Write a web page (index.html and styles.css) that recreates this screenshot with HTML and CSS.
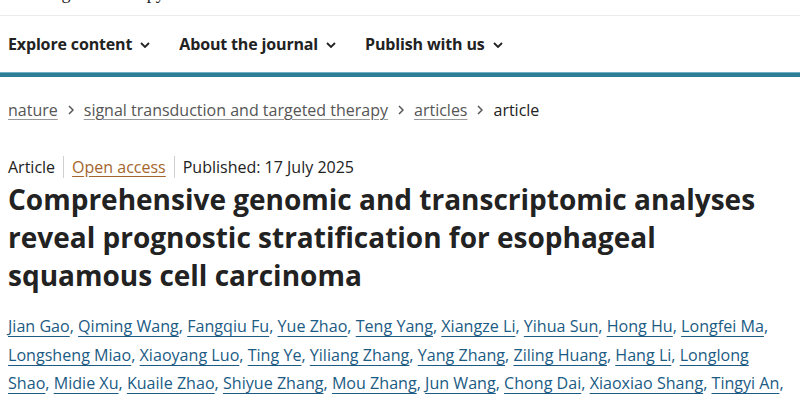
FILE: index.html
```html
<!DOCTYPE html>
<html lang="en">
<head>
<meta charset="utf-8">
<title>Signal Transduction and Targeted Therapy</title>
<link rel="stylesheet" href="styles.css">
</head>
<body>
<header class="masthead">
  <div class="logo"><span class="logo-text">Signal Transduction<br>and Targeted Therapy</span></div>
  <nav class="menu">
    <a class="menu-item" href="#">Explore content <svg class="chev" viewBox="0 0 10 6" width="10" height="6"><path d="M1 1l4 4 4-4" fill="none" stroke="currentColor" stroke-width="1.8"/></svg></a>
    <a class="menu-item" href="#">About the journal <svg class="chev" viewBox="0 0 10 6" width="10" height="6"><path d="M1 1l4 4 4-4" fill="none" stroke="currentColor" stroke-width="1.8"/></svg></a>
    <a class="menu-item" href="#">Publish with us <svg class="chev" viewBox="0 0 10 6" width="10" height="6"><path d="M1 1l4 4 4-4" fill="none" stroke="currentColor" stroke-width="1.8"/></svg></a>
  </nav>
  <div class="bar"></div>
</header>
<main class="content">
  <ol class="crumbs">
    <li><a href="#">nature</a></li>
    <li class="sep"><svg viewBox="0 0 6 10" width="6" height="10"><path d="M1 1l4 4-4 4" fill="none" stroke="currentColor" stroke-width="1.5"/></svg></li>
    <li><a href="#">signal transduction and targeted therapy</a></li>
    <li class="sep"><svg viewBox="0 0 6 10" width="6" height="10"><path d="M1 1l4 4-4 4" fill="none" stroke="currentColor" stroke-width="1.5"/></svg></li>
    <li><a href="#">articles</a></li>
    <li class="sep"><svg viewBox="0 0 6 10" width="6" height="10"><path d="M1 1l4 4-4 4" fill="none" stroke="currentColor" stroke-width="1.5"/></svg></li>
    <li class="current">article</li>
  </ol>
  <ul class="meta">
    <li>Article</li>
    <li><a class="oa" href="#">Open access</a></li>
    <li>Published: 17 July 2025</li>
  </ul>
  <h1 class="title">Comprehensive genomic and transcriptomic analyses reveal prognostic stratification for esophageal squamous cell carcinoma</h1>
  <p class="authors"><a href="#">Jian Gao</a>, <a href="#">Qiming Wang</a>, <a href="#">Fangqiu Fu</a>, <a href="#">Yue Zhao</a>, <a href="#">Teng Yang</a>, <a href="#">Xiangze Li</a>, <a href="#">Yihua Sun</a>, <a href="#">Hong Hu</a>, <a href="#">Longfei Ma</a>, <a href="#">Longsheng Miao</a>, <a href="#">Xiaoyang Luo</a>, <a href="#">Ting Ye</a>, <a href="#">Yiliang Zhang</a>, <a href="#">Yang Zhang</a>, <a href="#">Ziling Huang</a>, <a href="#">Hang Li</a>, <a href="#">Longlong Shao</a>, <a href="#">Midie Xu</a>, <a href="#">Kuaile Zhao</a>, <a href="#">Shiyue Zhang</a>, <a href="#">Mou Zhang</a>, <a href="#">Jun Wang</a>, <a href="#">Chong Dai</a>, <a href="#">Xiaoxiao Shang</a>, <a href="#">Tingyi An</a>, <a href="#">Haiquan Chen</a></p>
</main>
</body>
</html>
```
FILE: styles.css
```css
* { box-sizing: border-box; }
html, body { margin: 0; padding: 0; background: #fff; }
body { font-family: "Open Sans", "Noto Sans", sans-serif; color: #222; overflow: hidden; height: 400px; }
a { color: inherit; }

.masthead { display: flex; flex-direction: column; }
.logo { height: 16px; overflow: hidden; border-bottom: 1px solid #ebebeb; padding-left: 8px; }
.logo-text { display: block; font-family: "Liberation Serif", serif; font-size: 18px; line-height: 20px; margin-top: -37px; color: #222; }

.menu { display: flex; gap: 29px; padding: 0 8px; height: 56px; align-items: center; }
.menu-item { display: flex; align-items: center; gap: 8px; font-weight: 700; font-size: 16px; text-decoration: none; color: #222; letter-spacing: -0.15px; }
.chev { margin-top: 2px; }
.bar { height: 5px; background: #2e7f95; border-top: 1px solid #6fb3c2; }

.content { padding: 0 8px; }
.crumbs { list-style: none; margin: 0; padding: 21px 0 0; display: flex; align-items: center; gap: 10px; font-size: 16px; line-height: 24px; color: #555; }
.crumbs a { color: #555; text-decoration: underline; text-decoration-color: #999; text-underline-offset: 3px; }
.crumbs .sep { display: flex; color: #555; }
.crumbs .current { color: #222; }

.meta { list-style: none; margin: 34px 0 0; padding: 0; display: flex; font-size: 16px; line-height: 22px; }
.meta li { padding: 0 8px; border-left: 1px solid #d0d0d0; }
.meta li:first-child { padding-left: 0; border-left: 0; }
.meta .oa { color: #a4662c; text-underline-offset: 3px; }

.title { font-size: 28px; line-height: 38px; font-weight: 700; margin: 2px 0 0; color: #222; letter-spacing: 0; }

.authors { margin: 18px 0 0; font-size: 16.1px; line-height: 28.5px; color: #1b5b84; }
.authors a { color: #1b5b84; text-underline-offset: 4px; }
```
